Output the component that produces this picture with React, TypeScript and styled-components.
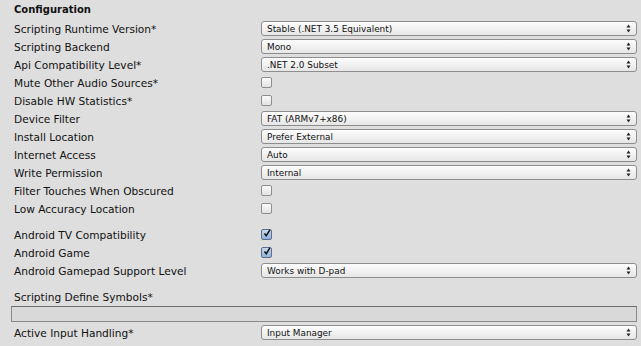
import styled, { createGlobalStyle } from "styled-components";

const GlobalStyle = createGlobalStyle`
  html, body {
    margin: 0;
    padding: 0;
    background: #dedede;
  }
  body {
    font-family: "DejaVu Sans", "Liberation Sans", sans-serif;
    color: #111;
  }
`;

const Panel = styled.div`
  width: 641px;
  height: 346px;
  overflow: hidden;
  background: #dedede;
  padding: 0 4px 0 14px;
  box-sizing: border-box;
`;

const Header = styled.div`
  height: 20px;
  line-height: 19px;
  font-size: 10px;
  font-weight: bold;
`;

const Group = styled.div<{ $gap?: number }>`
  margin-top: ${({ $gap }) => $gap ?? 0}px;
`;

const Row = styled.div`
  display: grid;
  grid-template-columns: 247px 1fr;
  align-items: center;
  height: 18px;
`;

const Label = styled.div`
  font-size: 10.6px;
  white-space: nowrap;
`;

const Popup = styled.div`
  display: flex;
  align-items: center;
  justify-content: space-between;
  height: 15px;
  margin-top: -1px;
  padding: 0 5px;
  border: 1px solid #8e8e8e;
  border-radius: 3px;
  background: linear-gradient(#fdfdfd, #e6e6e6);
  font-size: 8.9px;
  box-sizing: border-box;
`;

const Check = styled.div<{ $on?: boolean }>`
  width: 11px;
  height: 11px;
  margin-top: -1px;
  box-sizing: border-box;
  border: 1px solid ${({ $on }) => ($on ? "#5b6f8c" : "#8e8e8e")};
  border-radius: 2px;
  background: ${({ $on }) =>
    $on
      ? "linear-gradient(#c9d9ee, #8fb0dc)"
      : "linear-gradient(#fbfbfb, #e2e2e2)"};
  display: flex;
  align-items: center;
  justify-content: center;
`;

const TextField = styled.div`
  height: 16px;
  margin: 0 0 2px -3px;
  box-sizing: border-box;
  border: 1px solid #8a8a8a;
  border-top-color: #6f6f6f;
  background: #d9d9d9;
`;

const Arrows = () => (
  <svg width="5" height="9" viewBox="0 0 5 9">
    <path d="M2.5 0.5 L4.5 3.5 H0.5 Z" fill="#222" />
    <path d="M2.5 8.5 L4.5 5.5 H0.5 Z" fill="#222" />
  </svg>
);

const Tick = () => (
  <svg width="11" height="11" viewBox="0 0 11 11" style={{ marginTop: -2, marginLeft: 1 }}>
    <path d="M2 5.5 L4.5 8.5 L9.5 0.5" fill="none" stroke="#111" strokeWidth="2" />
  </svg>
);

type Field =
  | { label: string; kind: "popup"; value: string }
  | { label: string; kind: "check"; on?: boolean };

const mainFields: Field[] = [
  { label: "Scripting Runtime Version*", kind: "popup", value: "Stable (.NET 3.5 Equivalent)" },
  { label: "Scripting Backend", kind: "popup", value: "Mono" },
  { label: "Api Compatibility Level*", kind: "popup", value: ".NET 2.0 Subset" },
  { label: "Mute Other Audio Sources*", kind: "check" },
  { label: "Disable HW Statistics*", kind: "check" },
  { label: "Device Filter", kind: "popup", value: "FAT (ARMv7+x86)" },
  { label: "Install Location", kind: "popup", value: "Prefer External" },
  { label: "Internet Access", kind: "popup", value: "Auto" },
  { label: "Write Permission", kind: "popup", value: "Internal" },
  { label: "Filter Touches When Obscured", kind: "check" },
  { label: "Low Accuracy Location", kind: "check" },
];

const androidFields: Field[] = [
  { label: "Android TV Compatibility", kind: "check", on: true },
  { label: "Android Game", kind: "check", on: true },
  { label: "Android Gamepad Support Level", kind: "popup", value: "Works with D-pad" },
];

function FieldRow({ field }: { field: Field }) {
  return (
    <Row>
      <Label>{field.label}</Label>
      {field.kind === "popup" ? (
        <Popup>
          <span>{field.value}</span>
          <Arrows />
        </Popup>
      ) : (
        <div>
          <Check $on={field.on}>{field.on && <Tick />}</Check>
        </div>
      )}
    </Row>
  );
}

export default function App() {
  return (
    <>
      <GlobalStyle />
      <Panel>
        <Header>Configuration</Header>
        <Group>
          {mainFields.map((f) => (
            <FieldRow key={f.label} field={f} />
          ))}
        </Group>
        <Group $gap={8}>
          {androidFields.map((f) => (
            <FieldRow key={f.label} field={f} />
          ))}
        </Group>
        <Group $gap={8}>
          <Row>
            <Label>Scripting Define Symbols*</Label>
          </Row>
          <TextField />
          <FieldRow
            field={{ label: "Active Input Handling*", kind: "popup", value: "Input Manager" }}
          />
        </Group>
      </Panel>
    </>
  );
}
